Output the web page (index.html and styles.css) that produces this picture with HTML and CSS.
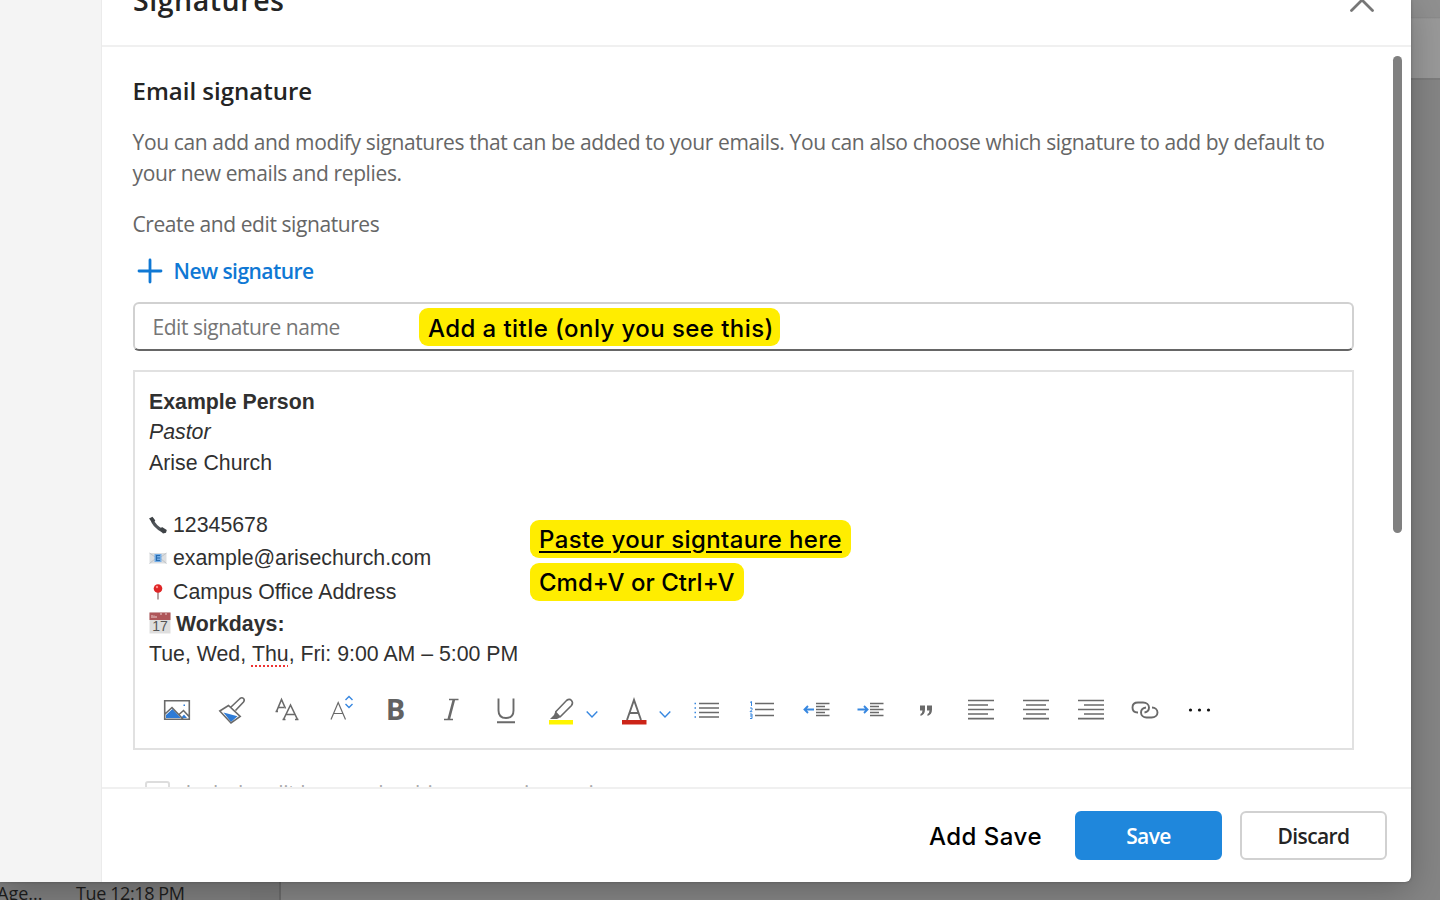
FILE: index.html
```html
<!DOCTYPE html>
<html lang="en">
<head>
<meta charset="utf-8">
<title>Signatures</title>
<link rel="stylesheet" href="styles.css">
</head>
<body>
<div class="backdrop">
  <div class="mail-strip"></div>
  <div class="mail-row"><span class="mail-subject">Age...</span><span class="mail-time">Tue 12:18 PM</span></div>
</div>
<div class="dialog">
  <aside class="side"></aside>
  <section class="panel">
    <header class="head">
      <h1 class="title">Signatures</h1>
      <svg class="close" width="28" height="28" viewBox="0 0 28 28"><path d="M3.500 3.500l21 21M24.500 3.500l-21 21"/></svg>
    </header>
    <main class="content">
      <h2 class="subtitle">Email signature</h2>
      <p class="desc"><span>You can add and modify signatures that can be added to your emails. You can also choose which signature to add by default to</span><br><span>your new emails and replies.</span></p>
      <p class="label">Create and edit signatures</p>
      <div class="new"><svg width="26" height="26" viewBox="0 0 26 26"><path d="M13 2v22M2 13h22"/></svg><span>New signature</span></div>
      <div class="name"><span>Edit signature name</span><span class="tip tip-name">Add a title (only you see this)</span></div>
      <div class="editor">
        <div class="sig">
          <div class="line bold">Example Person</div>
          <div class="line italic">Pastor</div>
          <div class="line">Arise Church</div>
          <div class="line"></div>
          <div class="line phone"><svg class="emo" width="18" height="18" viewBox="0 0 18 18"><path d="M3 3Q4.500 10 14 15" fill="none" stroke="#50555a" stroke-width="3.400"/><path d="M0 2.500L3.500.8 6.300 4.500 3.600 7zM10.500 13.500l2.500-2.500 4.800 3-.8 2.700-3 .8z" fill="#3f4347"/></svg>12345678</div>
          <div class="line mail"><svg class="emo" width="18" height="18" viewBox="0 0 18 18"><path d="M.5 4h17v10.500H.5z" fill="#dcdee0"/><path d="M.5 4l8.500 6 8.500-6M.5 14.500l6-5M17.500 14.500l-6-5" fill="none" stroke="#b8bdc2" stroke-width=".8"/><path d="M5.500 5h7v8h-7z" fill="#75aee8"/><path d="M11 6.500H7.500v5H11M7.500 9H11" fill="none" stroke="#286cae" stroke-width="1.200"/></svg>example@arisechurch.com</div>
          <div class="line pin"><svg class="emo" width="18" height="18" viewBox="0 0 18 18"><path d="M9 8v8.500" stroke="#a68d8d" stroke-width="1.600"/><circle cx="9" cy="5.500" r="4.300" fill="#df2526"/><circle cx="8" cy="4" r="1.200" fill="#ff8f8b"/></svg>Campus Office Address</div>
          <div class="line bold cal"><svg class="emo" width="22" height="22" viewBox="0 0 22 22"><path d="M.5.500h21v21H.5z" fill="#dedede"/><path d="M.5.500h21v7.500H.5z" fill="#af5659"/><path d="M3 6V3M5 6V3.500M7 6V4M12 1v2M17 1v2" stroke="#e2bbbb" stroke-width="1.200"/><text x="11" y="19" text-anchor="middle" class="cal-num">17</text></svg>Workdays:</div>
          <div class="line last">Tue, Wed, <span class="typo">Thu</span>, Fri: 9:00 AM – 5:00 PM</div>
        </div>
        <div class="paste"><span class="tip"><span class="underlined">Paste your signtaure here</span></span><span class="tip keys">Cmd+V or Ctrl+V</span></div>
        <div class="tools">
          <i><svg viewBox="0 0 32 32"><path class="blue" d="M5 24v-3l6.500-6 8.500 9zM20 24l3-3.500 3 3.500z"/><path class="g" d="M3.700 6.700h24.600v18.600H3.700zM4 20l7-6.500L22 25M18 20.500l4.500-4 6 6.500"/><path class="blue" d="M22.500 10.500h1.500v1.500h-1.500z"/></svg></i>
          <i><svg viewBox="0 0 32 32"><path class="blue" d="M7.500 18.500l14 3.800-6.500 5.700z"/><path class="g" d="M12.500 11.500L3.800 17l11.200 12 9.200-6.500zM15 13l9-8.500q2-1.500 3.500 0t0 3.500l-8 8.500"/></svg></i>
          <i><svg viewBox="0 0 32 32"><path class="g" d="M5.500 17.500l5-12 4 9M7.500 13.500h5.500M12.500 25.500l7-14.500 7 14.500M15 20.500h9M11.500 25.500h3M24 25.500h3.500M4.500 17.500h2.500"/></svg></i>
          <i><svg viewBox="0 0 32 32"><path class="g thin" d="M5 25.500l7.200-17 7.300 17M7.500 19.500h9.500"/><path class="b" d="M19.500 6l3.500-3.500L26.500 6M19.500 10l3.500 3.500L26.500 10"/></svg></i>
          <i><b class="glyph-b">B</b></i>
          <i><svg viewBox="0 0 32 32"><path class="g" d="M14 5.500h9.500M9 25.500h9M18.300 6l-5 19M19.300 6l-5 19"/></svg></i>
          <i><svg viewBox="0 0 32 32"><path class="g u" d="M8.500 4.500v12q0 7.500 7.500 7.500t7.500-7.500v-12M7 28.200h18"/></svg></i>
          <i><svg viewBox="0 0 32 32"><path fill="#fff500" d="M4 26h24v4.500H4z"/><path class="g" d="M10.500 18L21.500 6.500q3-2.200 5 0t0 5L15 23"/><path fill="#6a6a6a" d="M10.500 17l5.500 6-4 2H5l4-4z"/></svg></i>
          <i class="chev"><svg viewBox="0 0 12 12"><path class="b" d="M.7 3.500L6 9l5.300-5.500"/></svg></i>
          <i><svg viewBox="0 0 32 32"><path fill="#cc2418" d="M4 26h24.500v4.500H4z"/><path class="g u" d="M9 26L16 6l7 20M11.500 19h9"/></svg></i>
          <i class="chev"><svg viewBox="0 0 12 12"><path class="b" d="M.7 3.500L6 9l5.300-5.500"/></svg></i>
          <i><svg viewBox="0 0 32 32"><path class="g" d="M8 9.500h20M8 14h20M8 18.500h20M8 23h20"/><path class="b" d="M3.500 9.500H5M3.500 14H5M3.500 18.500H5M3.500 23H5"/></svg></i>
          <i><svg viewBox="0 0 32 32"><path class="g" d="M9 9.500h19M9 15.500h19M9 21.500h19"/><path class="b tiny" d="M4 8.500L5.500 7.500v4.500M4 14h2v1.700l-2 2h2.300M4 20h2v4.500h-2M4 22h2"/></svg></i>
          <i><svg viewBox="0 0 32 32"><path class="g" d="M15 9.500h13.500M15 12.500h9M15 15.500h13.500M15 18.500h9M15 21.500h13.500"/><path class="b arrow" d="M13 15.500H3.500M7 12l-3.500 3.500L7 19"/></svg></i>
          <i><svg viewBox="0 0 32 32"><path class="g" d="M15 9.500h13.500M15 12.500h9M15 15.500h13.500M15 18.500h9M15 21.500h13.500"/><path class="b arrow" d="M2.500 15.500h10M9 12l3.500 3.500L9 19"/></svg></i>
          <i><svg viewBox="0 0 32 32"><path fill="#6a6a6a" d="M10 11.500h5v4q0 5-4.500 6.500v-2q2-1 2-3.500H10zM17 11.500h5v4q0 5-4.500 6.500v-2q2-1 2-3.500H17z"/></svg></i>
          <i><svg viewBox="0 0 32 32"><path class="g al" d="M3 6.500h26M3 11h20M3 15.500h26M3 20h20M3 24.700h26"/></svg></i>
          <i><svg viewBox="0 0 32 32"><path class="g al" d="M3 6.500h26M6 11h20M3 15.500h26M6 20h20M3 24.700h26"/></svg></i>
          <i><svg viewBox="0 0 32 32"><path class="g al" d="M3 6.500h26M9 11h20M3 15.500h26M9 20h20M3 24.700h26"/></svg></i>
          <i><svg viewBox="0 0 32 32"><path class="g u" d="M9 18.500h-.5C5.500 18.500 3.500 16.500 3.500 13.500S5.500 8.500 9 8.500h5c3.500 0 6 2 6 5 0 2.500-1.500 4.500-4.500 5"/><path class="g u" d="M17 13.500c-3 .5-5 2.500-5 5 0 3 2.500 5 5.500 5h5c3.500 0 6-2 6-5s-2.500-5-5.500-5"/></svg></i>
          <i><svg viewBox="0 0 32 32"><g fill="#111"><circle cx="6.500" cy="16" r="1.600"/><circle cx="15.500" cy="16" r="1.600"/><circle cx="24.500" cy="16" r="1.600"/></g></svg></i>
        </div>
      </div>
      <div class="include"><span class="box"></span><span class="include-text">Include edit bar used so his newer piece using</span></div>
    </main>
    <footer class="foot">
      <span class="add">Add Save</span>
      <button class="btn primary">Save</button>
      <button class="btn">Discard</button>
    </footer>
  </section>
  <div class="scroll"></div>
</div>
</body>
</html>
```
FILE: styles.css
```css
* { box-sizing: border-box; }
body { margin: 0; width: 1440px; height: 900px; overflow: hidden; position: relative; background: #858585; font-family: "Open Sans", "Noto Sans", sans-serif; color: #242424; }
h1, h2, p { margin: 0; font-weight: 600; }
span { white-space: nowrap; }
.backdrop { height: 900px; display: flex; flex-direction: column; justify-content: space-between; }
.mail-strip { align-self: flex-end; width: 100px; height: 80px; background: linear-gradient(#909090 17px, #868686 17px, #999 19px); border-bottom: 2px solid #7d7d7d; }
.mail-row { height: 20px; width: 281px; border-right: 2px solid #6b6b6b; background: linear-gradient(90deg, #7f7f7f 250px, #7b7b7b 250px); font-size: 18px; line-height: 27px; color: #1d1d1d; display: flex; }
.mail-subject { width: 79px; margin-left: -3px; }
.mail-time { letter-spacing: -.4px; }
.dialog { position: absolute; left: 0; top: 0; width: 1411px; height: 882px; display: flex; background: #fff; border-radius: 0 0 6px 0; box-shadow: 0 8px 36px rgba(0,0,0,.25), 0 0 3px rgba(0,0,0,.25); }
.side { width: 102px; background: #f4f4f4; border-right: 1px solid #ebebeb; }
.panel { flex: 1; display: flex; flex-direction: column; }
.head { height: 47px; flex: none; border-bottom: 2px solid #f0f0f0; display: flex; justify-content: space-between; padding: 0 35px 0 31px; }
.title { font-size: 28.500px; line-height: 36px; margin-top: -18px; letter-spacing: .55px; }
.close { margin-top: -14px; fill: none; stroke: #777; stroke-width: 2.800; stroke-linecap: round; }
.content { height: 740px; flex: none; overflow: hidden; padding: 26px 57.500px 0 30.500px; }
.subtitle { font-size: 24px; line-height: 36px; }
.desc { margin-top: 18px; font-weight: 400; font-size: 21px; line-height: 30.500px; letter-spacing: -.365px; color: #666; }
.label { margin-top: 21px; font-weight: 400; font-size: 21px; line-height: 30px; letter-spacing: -.42px; color: #666; }
.new { margin-top: 17px; height: 30px; display: flex; align-items: center; gap: 11px; padding-left: 4px; color: #0f78d4; font-weight: 600; font-size: 21px; letter-spacing: -.55px; }
.new svg { fill: none; stroke: #0f78d4; stroke-width: 2.800; stroke-linecap: round; }
.name { margin-top: 16px; height: 49px; border: 2px solid #d1d1d1; border-bottom-color: #666; border-radius: 6px; display: flex; align-items: center; padding-left: 18px; font-size: 21px; letter-spacing: -.46px; color: #767676; position: relative; }
.tip { display: inline-flex; align-items: center; height: 38px; padding: 2px 9px 0; border-radius: 9px; background: #ffed00; color: #000; font: 500 24px Inter, sans-serif; letter-spacing: .37px; }
.tip-name { position: absolute; left: 284.500px; top: 4px; width: 361px; letter-spacing: .43px; }
.keys { letter-spacing: 0; }
.editor { margin-top: 19px; height: 380px; border: 2px solid #e1e1e1; padding: 14.500px 0 0 14.500px; position: relative; }
.sig { height: 281.500px; font: 21.300px/30.600px "Liberation Sans", Arial, sans-serif; color: #303030; }
.line { height: 30.600px; display: flex; align-items: center; white-space: pre; }
.bold { font-weight: 700; }
.italic { font-style: italic; }
.emo { margin-right: 6px; flex: none; }
.phone { height: 32px; }
.mail, .pin { height: 34px; }
.cal { height: 30px; }
.cal .emo { margin-right: 5px; position: relative; top: -1px; }
.cal-num { font: 14px "Liberation Sans", sans-serif; fill: #555; }
.typo { text-decoration: underline dotted #e33; text-decoration-thickness: 2px; text-underline-offset: 5px; }
.paste { position: absolute; left: 395.500px; top: 147.500px; display: flex; flex-direction: column; align-items: flex-start; gap: 5px; }
.underlined { text-decoration: underline; text-decoration-thickness: 2px; text-underline-offset: 3px; }
.tools { display: flex; align-items: center; height: 84px; padding-left: 1px; }
.tools i { width: 54.800px; flex: none; display: flex; justify-content: center; align-items: center; font-style: normal; }
.tools svg { width: 32px; height: 32px; fill: none; overflow: visible; }
.tools .chev { width: 18.200px; justify-content: flex-start; }
.tools .chev svg { width: 12px; height: 12px; margin: 8px 0 0 -2px; }
.g { stroke: #6a6a6a; stroke-width: 1.600; }
.thin { stroke-width: 1.200; }
.u { stroke-width: 1.900; }
.al { stroke-width: 1.700; }
.b { stroke: #3787e0; stroke-width: 1.400; }
.tiny { stroke-width: 1; }
.arrow { stroke-width: 1.900; }
.blue { fill: #2e7bd6; }
.glyph-b { font: 700 29px/32px "Open Sans", sans-serif; color: #626262; margin: -3px 2px 0 0; }
.include { margin: 31px 0 0 12px; display: flex; gap: 16px; font-size: 21px; line-height: 30px; letter-spacing: -.4px; color: #aaa; }
.include-text { margin-top: -3px; }
.box { width: 25px; height: 25px; border: 2px solid #ddd; border-radius: 3px; }
.foot { height: 95px; border-top: 2px solid #f0f0f0; display: flex; justify-content: flex-end; align-items: center; padding-right: 24px; }
.add { font: 500 24px Inter, sans-serif; letter-spacing: .5px; color: #000; margin: 2px 33px 0 0; }
.btn { width: 147px; height: 49px; border: 2px solid #d1d1d1; border-radius: 6px; background: #fff; color: #242424; font: 600 21px "Open Sans", sans-serif; letter-spacing: -.6px; padding: 0; }
.primary { background: #1f87dc; border-color: #1f87dc; color: #fff; margin-right: 18px; }
.scroll { position: absolute; left: 1393px; top: 56px; width: 9px; height: 477px; border-radius: 5px; background: #808080; }
```
